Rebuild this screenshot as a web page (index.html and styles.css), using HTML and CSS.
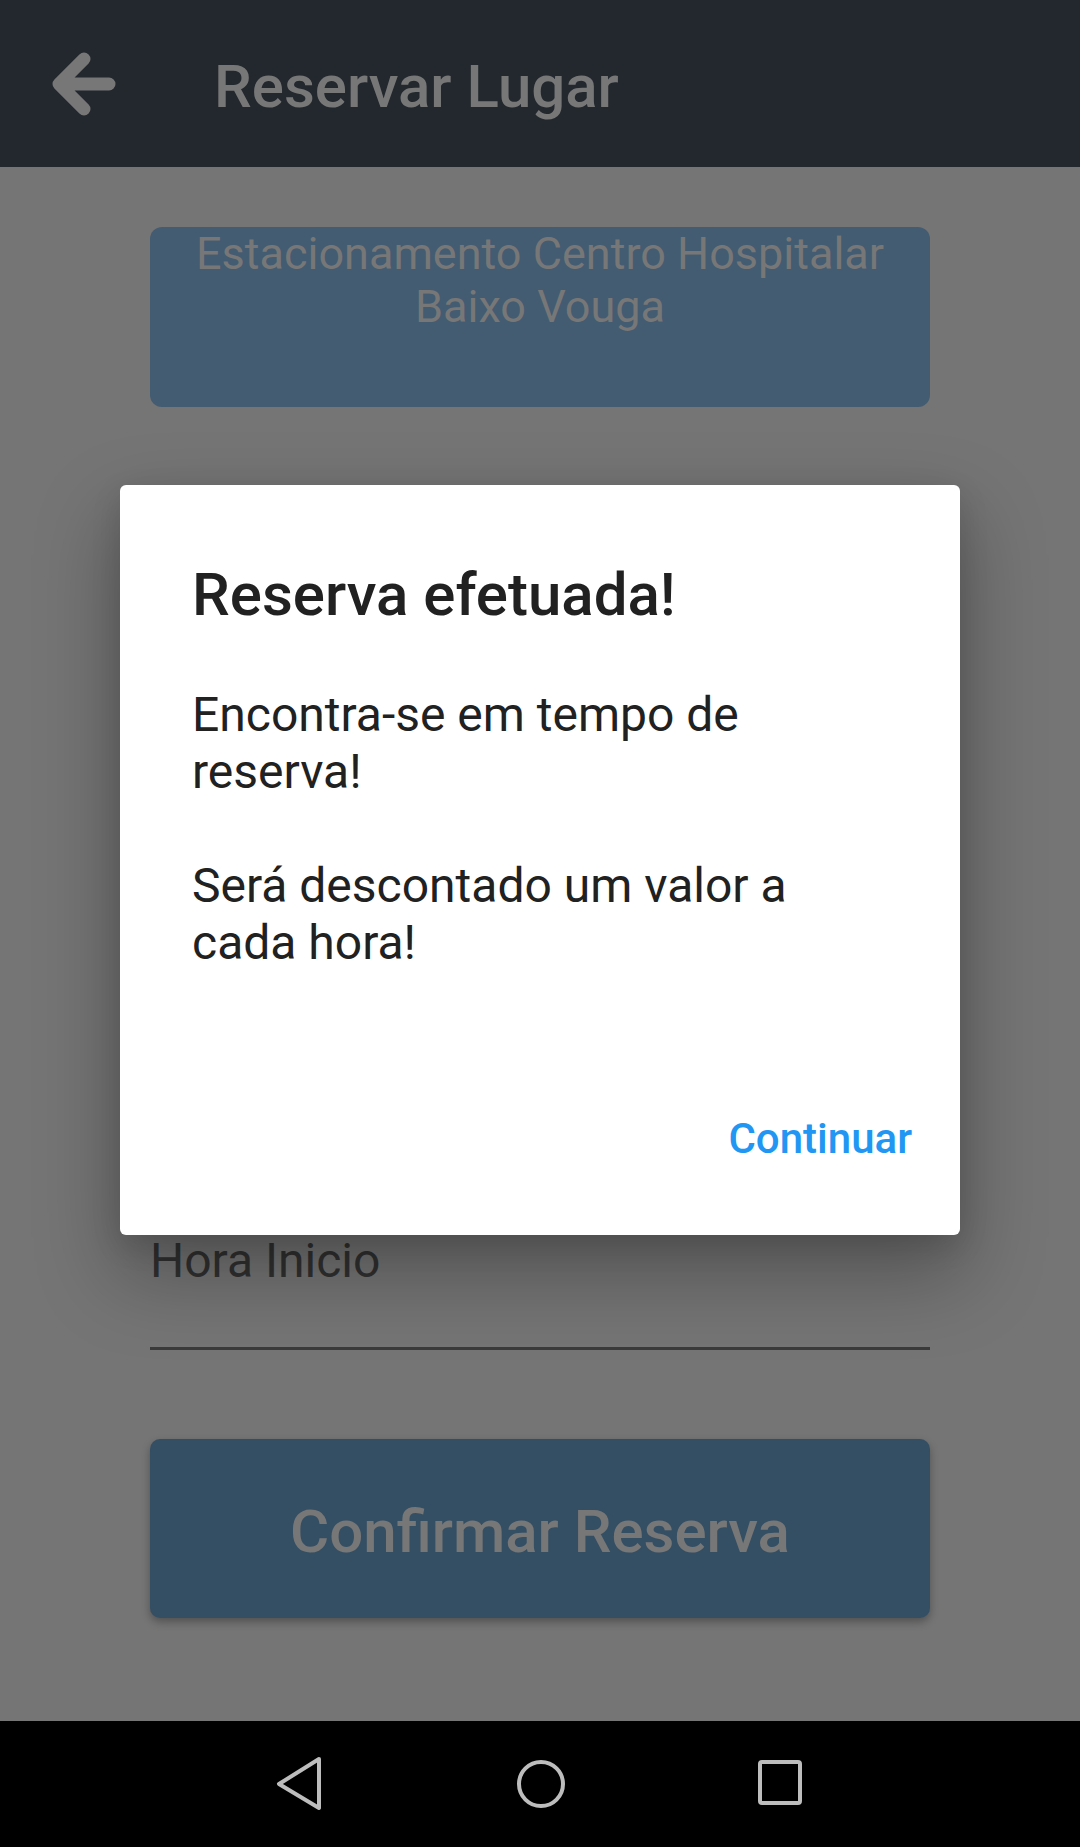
FILE: index.html
```html
<!DOCTYPE html>
<html lang="pt">
<head>
<meta charset="utf-8">
<title>Reservar Lugar</title>
<link rel="stylesheet" href="styles.css">
</head>
<body>
<div class="screen">
  <header class="appbar">
    <svg class="back" width="80" height="80" viewBox="0 0 80 80" aria-hidden="true">
      <path d="M44 15 L19 40 L44 65 M19 40 H69" fill="none" stroke="#777777" stroke-width="13" stroke-linecap="round" stroke-linejoin="round"/>
    </svg>
    <h1 class="title">Reservar Lugar</h1>
  </header>

  <main class="content">
    <div class="park">Estacionamento Centro Hospitalar<br>Baixo Vouga</div>
    <div class="spacer"></div>
    <div class="field">Hora Inicio</div>
    <div class="confirm">Confirmar Reserva</div>
  </main>

  <nav class="navbar">
    <svg width="80" height="80" viewBox="0 0 80 80" aria-hidden="true">
      <path d="M59 15 L19 40 L59 64 Z" fill="none" stroke="#bdbdbd" stroke-width="4" stroke-linejoin="round"/>
    </svg>
    <svg width="80" height="80" viewBox="0 0 80 80" aria-hidden="true">
      <circle cx="41" cy="40" r="22" fill="none" stroke="#bdbdbd" stroke-width="4"/>
    </svg>
    <svg width="80" height="80" viewBox="0 0 80 80" aria-hidden="true">
      <rect x="20" y="18" width="40" height="41" rx="2" fill="none" stroke="#bdbdbd" stroke-width="4"/>
    </svg>
  </nav>

  <div class="dialog" role="dialog">
    <h2 class="d-title">Reserva efetuada!</h2>
    <p class="d-body">Encontra-se em tempo de reserva!</p>
    <p class="d-body gap">Será descontado um valor a cada hora!</p>
    <div class="d-actions"><span class="d-btn">Continuar</span></div>
  </div>
</div>
</body>
</html>
```

FILE: styles.css
```css
html, body {
  margin: 0;
  padding: 0;
}
body {
  font-family: Roboto, "Noto Sans", "Liberation Sans", sans-serif;
  background: #757575;
}
.screen {
  position: relative;
  width: 1080px;
  height: 1847px;
  display: flex;
  flex-direction: column;
  overflow: hidden;
  background: #757575;
}
.appbar {
  height: 167px;
  flex: none;
  background: #22282e;
  display: flex;
  align-items: center;
  padding-left: 40px;
  box-sizing: border-box;
}
.back {
  display: block;
  flex: none;
}
.title {
  margin: 0 0 0 94px;
  padding-top: 6px;
  font-size: 60px;
  line-height: 72px;
  font-weight: 500;
  color: #777777;
}
.content {
  flex: 1;
  display: flex;
  flex-direction: column;
  padding: 60px 150px 0;
  background: #757575;
}
.park {
  height: 180px;
  flex: none;
  background: #435c72;
  border-radius: 12px;
  color: #777777;
  font-size: 45px;
  line-height: 53px;
  text-align: center;
}
.spacer {
  height: 824px;
  flex: none;
}
.field {
  font-size: 48px;
  line-height: 60px;
  color: #313131;
  padding-bottom: 56px;
  border-bottom: 3px solid #3b3b3b;
}
.confirm {
  margin-top: 89px;
  height: 179px;
  flex: none;
  background: #344f64;
  border-radius: 10px;
  box-shadow: 0 4px 8px rgba(0, 0, 0, 0.3);
  display: flex;
  align-items: center;
  justify-content: center;
  padding-top: 6px;
  box-sizing: border-box;
  font-size: 60px;
  font-weight: 500;
  color: #777777;
}
.navbar {
  height: 126px;
  flex: none;
  background: #000000;
  display: flex;
  align-items: center;
  justify-content: center;
  gap: 160px;
}
.navbar svg {
  display: block;
}
.dialog {
  position: absolute;
  left: 120px;
  top: 485px;
  width: 840px;
  height: 750px;
  box-sizing: border-box;
  background: #ffffff;
  border-radius: 6px;
  box-shadow: 0 36px 80px 6px rgba(0, 0, 0, 0.28), 0 10px 30px rgba(0, 0, 0, 0.12);
  display: flex;
  flex-direction: column;
  padding-top: 74px;
}
.d-title {
  margin: 0;
  padding: 0 72px;
  font-size: 60px;
  line-height: 72px;
  font-weight: 500;
  color: #212121;
}
.d-body {
  margin: 55px 0 0;
  padding: 0 72px;
  font-size: 48px;
  line-height: 57px;
  color: #212121;
}
.d-body.gap {
  margin-top: 57px;
}
.d-actions {
  margin-top: auto;
  display: flex;
  justify-content: flex-end;
  padding: 0 48px 72px 0;
}
.d-btn {
  font-size: 42px;
  line-height: 48px;
  font-weight: 500;
  color: #2196f3;
}
```
